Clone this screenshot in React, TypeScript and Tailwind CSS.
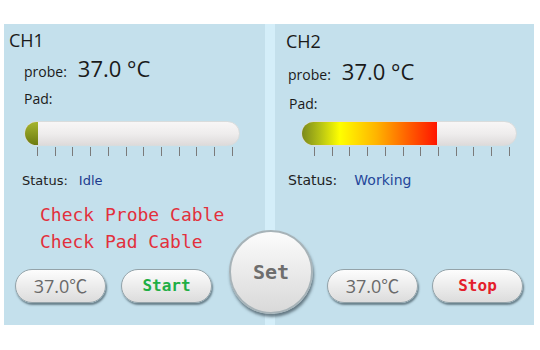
import React from 'react';

const TICKS = Array.from({ length: 12 }, (_, i) => i);

const Ticks: React.FC = () => (
  <div className="ml-[13px] mt-[1px] flex h-[9px] w-[196px] justify-between">
    {TICKS.map((i) => (
      <div key={i} className="h-full w-px bg-[#7a7a7a]" />
    ))}
  </div>
);

const Bar: React.FC<{ working?: boolean }> = ({ working = false }) => (
  <div className="flex h-[25px] w-[216px] overflow-hidden rounded-full border border-[#d9dcdc] bg-linear-to-b from-[#f8f6f6] via-[#efeded] to-[#dedbdb]">
    {working ? (
      <div className="h-full w-[135px] bg-[linear-gradient(to_right,#7b8a1c,#b8c414_14%,#ffff00_28%,#ffb400_55%,#ff5a00_80%,#ff1500)]" />
    ) : (
      <div className="h-full w-[13px] bg-linear-to-b from-[#a6b52e] to-[#6d7c10]" />
    )}
  </div>
);

const Pill: React.FC<{ children: React.ReactNode }> = ({ children }) => (
  <div className="flex h-[34px] w-[91px] items-center justify-center rounded-full border border-[#94a3a9] bg-linear-to-b from-[#fdfdfd] to-[#dcdcdc] shadow-[1px_2px_2px_rgba(45,65,75,0.6)]">
    {children}
  </div>
);

const Temp: React.FC = () => (
  <span className="font-['Open_Sans','Noto_Sans_CJK_SC',sans-serif] text-[18px] leading-none text-[#6a6a6a]">
    37.0℃
  </span>
);

const Probe: React.FC<{ className: string }> = ({ className }) => (
  <div className={`flex items-baseline font-['Open_Sans',sans-serif] leading-none text-[#1a1a1a] ${className}`}>
    <span className="text-[14px]">probe:</span>
    <span className="ml-[11px] text-[22px]">37.0 °C</span>
  </div>
);

export default function App() {
  return (
    <div className="h-[350px] w-[540px] bg-white pl-[4px] pt-[24px]">
      <div className="relative flex h-[301px] w-[530px]">
        {/* CH1 */}
        <div className="flex w-[261px] flex-col bg-[#c4e0ec]">
          <div className="ml-[5px] mt-[7px] font-['Open_Sans',sans-serif] text-[18px] leading-none text-[#1a1a1a]">
            CH1
          </div>
          <Probe className="ml-[20px] mt-[8px]" />
          <div className="ml-[20px] mt-[13px] font-['Open_Sans',sans-serif] text-[14px] leading-none text-[#1a1a1a]">
            Pad:
          </div>
          <div className="ml-[20px] mt-[15px]">
            <Bar />
            <Ticks />
          </div>
          <div className="ml-[18px] mt-[18px] flex font-['DejaVu_Sans',sans-serif] text-[13px] leading-none">
            <span className="text-[#222]">Status:</span>
            <span className="ml-[11px] text-[#1c3c8e]">Idle</span>
          </div>
          <div className="ml-[36px] mt-[19px] font-['DejaVu_Sans_Mono',monospace] text-[18px] leading-none text-[#e2303c]">
            Check Probe Cable
          </div>
          <div className="ml-[36px] mt-[9px] font-['DejaVu_Sans_Mono',monospace] text-[18px] leading-none text-[#e2303c]">
            Check Pad Cable
          </div>
          <div className="ml-[11px] mt-[18px] flex gap-[15px]">
            <Pill>
              <Temp />
            </Pill>
            <Pill>
              <span className="font-['DejaVu_Sans_Mono',monospace] text-[16px] font-bold leading-none text-[#1fae45]">
                Start
              </span>
            </Pill>
          </div>
        </div>

        <div className="w-[10px] bg-[#d4eef9]" />

        {/* CH2 */}
        <div className="flex w-[259px] flex-col bg-[#c4e0ec]">
          <div className="ml-[11px] mt-[8px] font-['Open_Sans',sans-serif] text-[18px] leading-none text-[#1a1a1a]">
            CH2
          </div>
          <Probe className="ml-[13px] mt-[10px]" />
          <div className="ml-[14px] mt-[15px] font-['Open_Sans',sans-serif] text-[14px] leading-none text-[#1a1a1a]">
            Pad:
          </div>
          <div className="ml-[26px] mt-[10px]">
            <Bar working />
            <Ticks />
          </div>
          <div className="ml-[13px] mt-[17px] flex font-['DejaVu_Sans',sans-serif] text-[14px] leading-none">
            <span className="text-[#222]">Status:</span>
            <span className="ml-[17px] text-[#25479a]">Working</span>
          </div>
          <div className="ml-[52px] mt-[82px] flex gap-[14px]">
            <Pill>
              <Temp />
            </Pill>
            <Pill>
              <span className="font-['DejaVu_Sans_Mono',monospace] text-[16px] font-bold leading-none text-[#e41e2c]">
                Stop
              </span>
            </Pill>
          </div>
        </div>

        <div className="absolute left-[225px] top-[206px] flex h-[84px] w-[84px] items-center justify-center rounded-full border-2 border-[#a7b3b8] bg-linear-to-b from-[#fcfcfc] to-[#d9d9d9] shadow-[1px_3px_3px_rgba(35,50,60,0.6)]">
          <span className="font-['DejaVu_Sans_Mono',monospace] text-[20px] font-bold leading-none text-[#6e6e6e]">
            Set
          </span>
        </div>
      </div>
    </div>
  );
}
